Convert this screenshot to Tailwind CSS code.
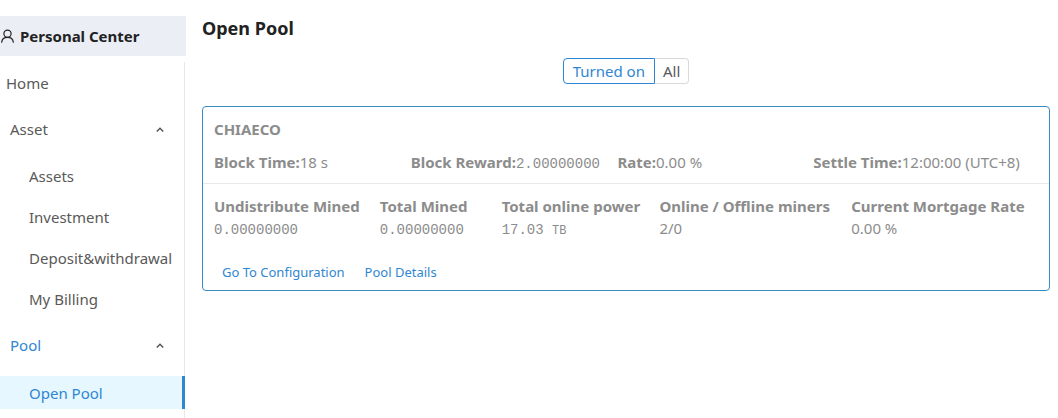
<!DOCTYPE html>
<html lang="en">
<head>
    <meta charset="UTF-8">
    <meta name="viewport" content="width=device-width, initial-scale=1.0">
    <title>Open Pool</title>
    <script src="https://cdn.jsdelivr.net/npm/@tailwindcss/browser@4"></script>
</head>
<body class="flex min-h-screen bg-white font-['Noto_Sans',sans-serif] text-[15px] leading-[22px] text-[#595959]">
    <!-- Sidebar -->
    <aside class="flex w-[186px] shrink-0 flex-col pt-4">
        <div class="flex h-10 items-center gap-1 bg-[#ebeef5] font-bold text-[#222]">
            <svg class="h-4 w-4 shrink-0" viewBox="0 0 16 16" fill="none" stroke="currentColor" stroke-width="1.2" stroke-linecap="round"><circle cx="7.5" cy="5.8" r="3.6"/><path d="M1.7 14.2c.3-2.9 2.600-4.800 5.800-4.800s5.500 1.900 5.800 4.800"/></svg>
            <span class="whitespace-nowrap">Personal Center</span>
        </div>
        <nav class="mt-1.5 mr-px flex grow flex-col border-r border-[#e8e8e8]">
            <a href="#" class="flex h-[42px] items-center pl-1.5">Home</a>
            <button type="button" aria-expanded="true" class="mt-[5px] flex h-10 items-center justify-between pr-5 pl-2.5">
                Asset
                <svg class="h-2 w-2" viewBox="0 0 8 8" fill="none" stroke="currentColor" stroke-width="1.6"><path d="M.8 6.500 4 3.300l3.200 3.200"/></svg>
            </button>
            <ul class="mt-2.5 flex flex-col gap-2">
                <li><a href="#" class="flex h-[33px] items-center pl-[29px]">Assets</a></li>
                <li><a href="#" class="flex h-[33px] items-center pl-[29px]">Investment</a></li>
                <li><a href="#" class="flex h-[33px] items-center pl-[29px]">Deposit&amp;withdrawal</a></li>
                <li><a href="#" class="flex h-[33px] items-center pl-[29px]">My Billing</a></li>
            </ul>
            <button type="button" aria-expanded="true" class="mt-2.5 flex h-10 items-center justify-between pr-5 pl-2.5">
                <span class="text-[#2f86d2]">Pool</span>
                <svg class="h-2 w-2" viewBox="0 0 8 8" fill="none" stroke="currentColor" stroke-width="1.6"><path d="M.8 6.500 4 3.300l3.200 3.200"/></svg>
            </button>
            <ul class="mt-[11px]">
                <li class="-mr-px"><a href="#" aria-current="page" class="flex h-[33px] items-center border-r-3 border-[#2f86d2] bg-[#e6f7ff] pl-[29px] text-[#2f86d2]">Open Pool</a></li>
            </ul>
        </nav>
    </aside>

    <!-- Content -->
    <main class="grow pt-4 pr-2 pl-4">
        <h1 class="text-lg leading-6 font-bold text-[#222]">Open Pool</h1>
        <div class="mt-[18px] flex justify-center">
            <button type="button" aria-pressed="true" class="h-[26px] rounded-l border border-[#2f86d2] px-[9px] text-[#2f86d2]">Turned on</button>
            <button type="button" aria-pressed="false" class="h-[26px] rounded-r border border-l-0 border-[#d9d9d9] px-2">All</button>
        </div>

        <section class="mt-[22px] rounded border border-[#3a8cc4] text-[#8c8c8c]">
            <div class="border-b border-[#e8e8e8] px-[11px] pt-[11px] pb-[9px] whitespace-nowrap">
                <h2 class="font-bold">CHIAECO</h2>
                <div class="mt-[11px] mr-2.5 grid grid-cols-[197fr_207fr_196fr_215fr]">
                    <div><b>Block Time:</b>18 s</div>
                    <div><b>Block Reward:</b><span class="font-['Liberation_Mono',monospace] text-sm">2.00000000</span></div>
                    <div><b>Rate:</b>0.00 %</div>
                    <div><b>Settle Time:</b>12:00:00 (UTC+8)</div>
                </div>
            </div>
            <dl class="mr-2.5 grid grid-cols-[166fr_122fr_158fr_192fr_177fr] px-[11px] pt-[11px] whitespace-nowrap">
                <div>
                    <dt class="font-bold">Undistribute Mined</dt>
                    <dd><span class="font-['Liberation_Mono',monospace] text-sm">0.00000000</span></dd>
                </div>
                <div>
                    <dt class="font-bold">Total Mined</dt>
                    <dd><span class="font-['Liberation_Mono',monospace] text-sm">0.00000000</span></dd>
                </div>
                <div>
                    <dt class="font-bold">Total online power</dt>
                    <dd><span class="font-['Liberation_Mono',monospace] text-sm">17.03 <small class="text-xs">TB</small></span></dd>
                </div>
                <div>
                    <dt class="font-bold">Online / Offline miners</dt>
                    <dd>2/0</dd>
                </div>
                <div>
                    <dt class="font-bold">Current Mortgage Rate</dt>
                    <dd>0.00 %</dd>
                </div>
            </dl>
            <div class="mt-[21px] flex gap-5 px-[19px] pb-[7px] text-[13px] leading-[22px] text-[#2f86d2]">
                <a href="#">Go To Configuration</a>
                <a href="#">Pool Details</a>
            </div>
        </section>
    </main>
</body>
</html>
